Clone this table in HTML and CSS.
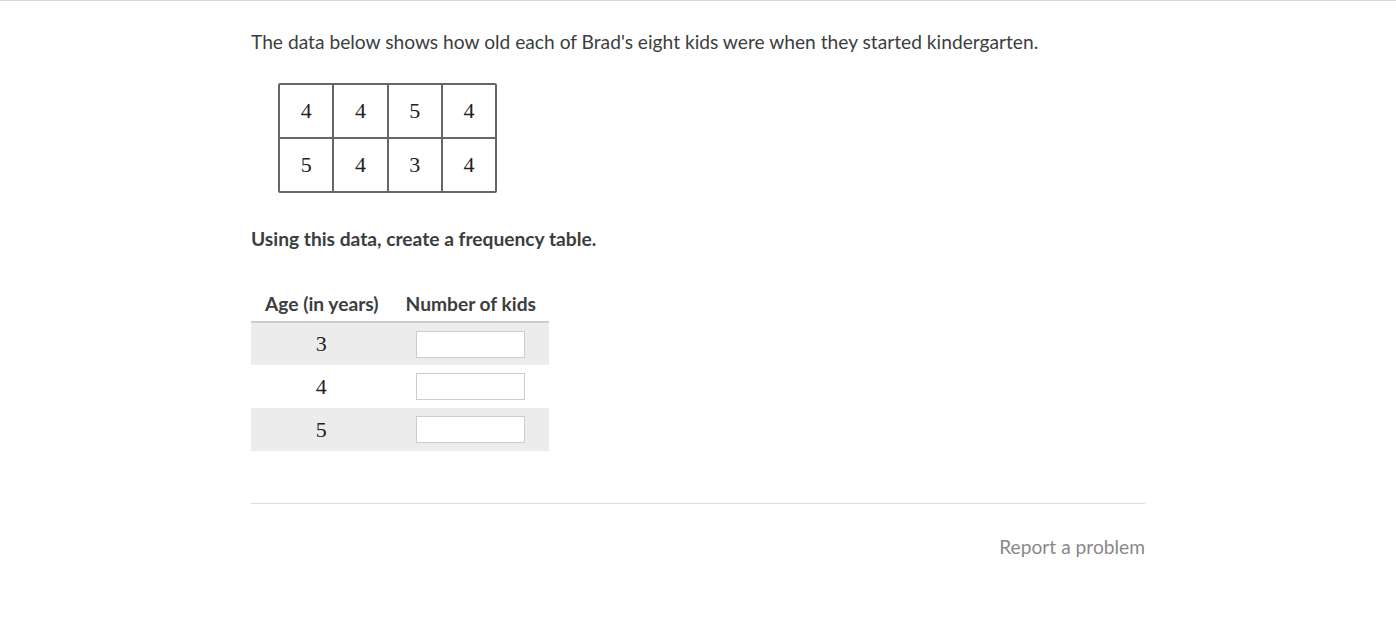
FILE: index.html
```html
<!DOCTYPE html>
<html>
<head>
<meta charset="utf-8">
<link rel="stylesheet" href="styles.css">
</head>
<body>
<div class="topline"></div>
<main class="content">
  <p class="intro">The data below shows how old each of Brad's eight kids were when they started kindergarten.</p>
  <div class="data-grid">
    <div class="cell">4</div><div class="cell">4</div><div class="cell">5</div><div class="cell">4</div>
    <div class="cell">5</div><div class="cell">4</div><div class="cell">3</div><div class="cell">4</div>
  </div>
  <p class="prompt">Using this data, create a frequency table.</p>
  <table class="freq">
    <thead>
      <tr><th class="c1">Age (in years)</th><th class="c2">Number of kids</th></tr>
    </thead>
    <tbody>
      <tr class="shade"><td class="num">3</td><td class="inp"><input type="text"></td></tr>
      <tr><td class="num">4</td><td class="inp"><input type="text"></td></tr>
      <tr class="shade"><td class="num">5</td><td class="inp"><input type="text"></td></tr>
    </tbody>
  </table>
  <div class="footer">
    <a class="report">Report a problem</a>
  </div>
</main>
</body>
</html>
```
FILE: styles.css
```css
html, body {
  margin: 0;
  padding: 0;
  background: #fff;
}
body {
  font-family: Lato, "Liberation Sans", sans-serif;
  color: #3b3e40;
}
.topline {
  height: 1px;
  background: #d8d8d8;
}
.content {
  width: 894px;
  margin: 0 0 0 251px;
  padding-top: 28px;
}
.intro {
  margin: 0;
  font-size: 19.2px;
  line-height: 25px;
}
.data-grid {
  margin: 29px 0 0 27px;
  display: grid;
  grid-template-columns: repeat(4, 52.25px);
  grid-template-rows: repeat(2, 52px);
  gap: 2px;
  background: #666;
  border: 2px solid #666;
  border-radius: 2px;
  width: max-content;
}
.cell {
  background: #fff;
  display: flex;
  align-items: center;
  justify-content: center;
  font-family: "Liberation Serif", "DejaVu Serif", serif;
  font-size: 22px;
  color: #222;
}
.prompt {
  margin: 33px 0 0;
  font-size: 19.2px;
  font-weight: bold;
  line-height: 25px;
}
.freq {
  margin-top: 41px;
  border-collapse: collapse;
  font-size: 19.2px;
}
.freq th {
  font-weight: bold;
  padding: 0 13px 5px 14px;
  line-height: 24px;
  border-bottom: 2px solid #ccc;
  text-align: center;
}
.freq tbody tr {
  height: 43px;
}
.freq td {
  padding: 0;
  text-align: center;
}
.freq tr.shade td {
  background: #ececec;
}
.freq td.num {
  font-family: "Liberation Serif", "DejaVu Serif", serif;
  font-size: 22px;
  color: #222;
}
.freq input {
  display: block;
  margin: 0 auto;
  width: 109px;
  height: 27px;
  box-sizing: border-box;
  border: 1px solid #ccc;
  background: #fff;
  padding: 0;
}
.footer {
  margin-top: 52px;
  border-top: 1px solid #ddd;
  display: flex;
  justify-content: flex-end;
  padding-top: 30px;
}
.report {
  font-size: 19.2px;
  color: #888;
  line-height: 25px;
}
```
